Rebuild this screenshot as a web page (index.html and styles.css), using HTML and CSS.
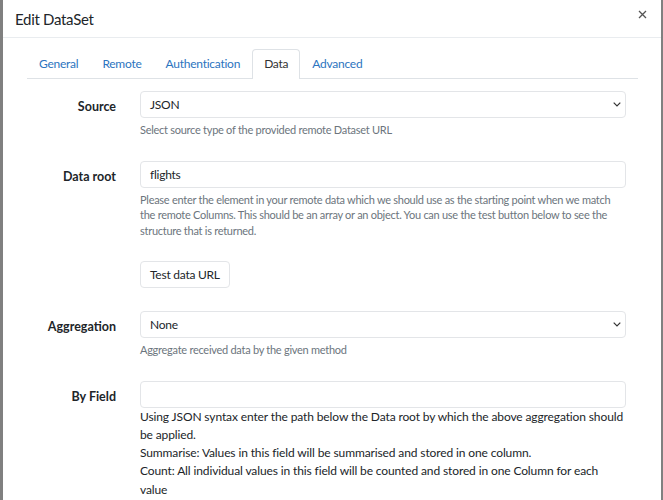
FILE: index.html
```html
<!DOCTYPE html>
<html lang="en">
<head>
  <meta charset="UTF-8">
  <meta name="viewport" content="width=device-width, initial-scale=1.0">
  <title>Edit DataSet</title>
  <link rel="stylesheet" href="styles.css">
</head>
<body>
  <div class="backdrop"></div>

  <div class="modal">
    <div class="modal-header">
      <h5 class="modal-title">Edit DataSet</h5>
      <button class="close" type="button" aria-label="Close">
        <svg width="9" height="9" viewBox="0 0 9 9"><path d="M1 1L8 8M8 1L1 8" stroke="#555" stroke-width="1.3" fill="none"/></svg>
      </button>
    </div>

    <div class="modal-body">
      <ul class="tabs">
        <li><a href="#">General</a></li>
        <li><a href="#">Remote</a></li>
        <li><a href="#">Authentication</a></li>
        <li><a href="#" class="active">Data</a></li>
        <li><a href="#">Advanced</a></li>
      </ul>

      <div class="form">
        <!-- source -->
        <div class="form-row">
          <label class="form-label">Source</label>
          <div class="form-field">
            <div class="select">
              <span>JSON</span>
              <svg width="8" height="5" viewBox="0 0 8 5"><path d="M0.7 0.7L4 4L7.3 0.7" stroke="#333" stroke-width="1.2" fill="none"/></svg>
            </div>
            <div class="help">Select source type of the provided remote Dataset URL</div>
          </div>
        </div>

        <!-- data root -->
        <div class="form-row">
          <label class="form-label">Data root</label>
          <div class="form-field">
            <div class="input">flights</div>
            <div class="help">Please enter the element in your remote data which we should use as the starting point when we match the remote Columns. This should be an array or an object. You can use the test button below to see the structure that is returned.</div>
          </div>
        </div>

        <div class="form-row">
          <span></span>
          <div class="form-field">
            <button class="btn" type="button">Test data URL</button>
          </div>
        </div>

        <!-- aggregation -->
        <div class="form-row">
          <label class="form-label">Aggregation</label>
          <div class="form-field">
            <div class="select">
              <span>None</span>
              <svg width="8" height="5" viewBox="0 0 8 5"><path d="M0.7 0.7L4 4L7.3 0.7" stroke="#333" stroke-width="1.2" fill="none"/></svg>
            </div>
            <div class="help">Aggregate received data by the given method</div>
          </div>
        </div>

        <div class="form-row">
          <label class="form-label">By Field</label>
          <div class="form-field">
            <div class="input"></div>
            <div class="notes">
              <p>Using JSON syntax enter the path below the Data root by which the above aggregation should be applied.</p>
              <p>Summarise: Values in this field will be summarised and stored in one column.</p>
              <p>Count: All individual values in this field will be counted and stored in one Column for each value</p>
            </div>
          </div>
        </div>
      </div>
    </div>
  </div>
</body>
</html>
```

FILE: styles.css
```css
body {
  margin: 0;
  height: 500px;
  overflow: hidden;
  display: flex;
  background-color: #808080;
  font-family: Lato, "Noto Sans", sans-serif;
  font-size: 12px;
  letter-spacing: -0.25px;
  color: #212529;
}

.backdrop {
  width: 3px;
}

.modal {
  width: 658px;
  background-color: #fff;
}

.modal-header {
  height: 37px;
  display: flex;
  align-items: center;
  justify-content: space-between;
  padding: 0 14px 0 12px;
  border-bottom: 1px solid #e9ecef;
}

.modal-title {
  margin: 0;
  font-size: 15px;
  font-weight: normal;
  letter-spacing: -0.3px;
}

.close {
  border: none;
  background: none;
  padding: 0;
  display: flex;
  margin-top: -8px;
}

.modal-body {
  padding: 11px 23px 0 24px;
}

.tabs {
  list-style: none;
  margin: 0;
  padding: 0;
  display: flex;
  border-bottom: 1px solid #dee2e6;
}

.tabs a {
  display: block;
  padding: 7px 11px;
  border: 1px solid transparent;
  border-bottom: none;
  border-radius: 4px 4px 0 0;
  color: #2c74c0;
  text-decoration: none;
  margin-bottom: -1px;
  line-height: 14px;
}

.tabs a.active {
  color: #333;
  border-color: #dee2e6;
  background-color: #fff;
  padding-bottom: 8px;
}

.form {
  padding: 12px 12px 0 0;
}

.form-row {
  display: grid;
  grid-template-columns: 89px 1fr;
  column-gap: 24px;
  margin-bottom: 23px;
}

.form-label {
  text-align: right;
  font-weight: bold;
  font-size: 12.5px;
  letter-spacing: 0;
  padding-top: 8px;
}

.select,
.input {
  height: 25px;
  border: 1px solid #e3e5e8;
  border-radius: 4px;
  padding: 0 4px 0 9px;
  display: flex;
  align-items: center;
  justify-content: space-between;
}

.help {
  margin-top: 4px;
  padding-right: 4px;
  font-size: 11px;
  letter-spacing: -0.27px;
  line-height: 15.5px;
  color: #6c757d;
}

.btn {
  height: 27px;
  padding: 0 9px;
  border: 1px solid #e3e5e8;
  border-radius: 4px;
  background-color: #fff;
  font-family: inherit;
  font-size: inherit;
  letter-spacing: inherit;
  color: #212529;
}

.notes {
  line-height: 18.3px;
  letter-spacing: -0.12px;
}

.notes p {
  margin: 0;
}
```
